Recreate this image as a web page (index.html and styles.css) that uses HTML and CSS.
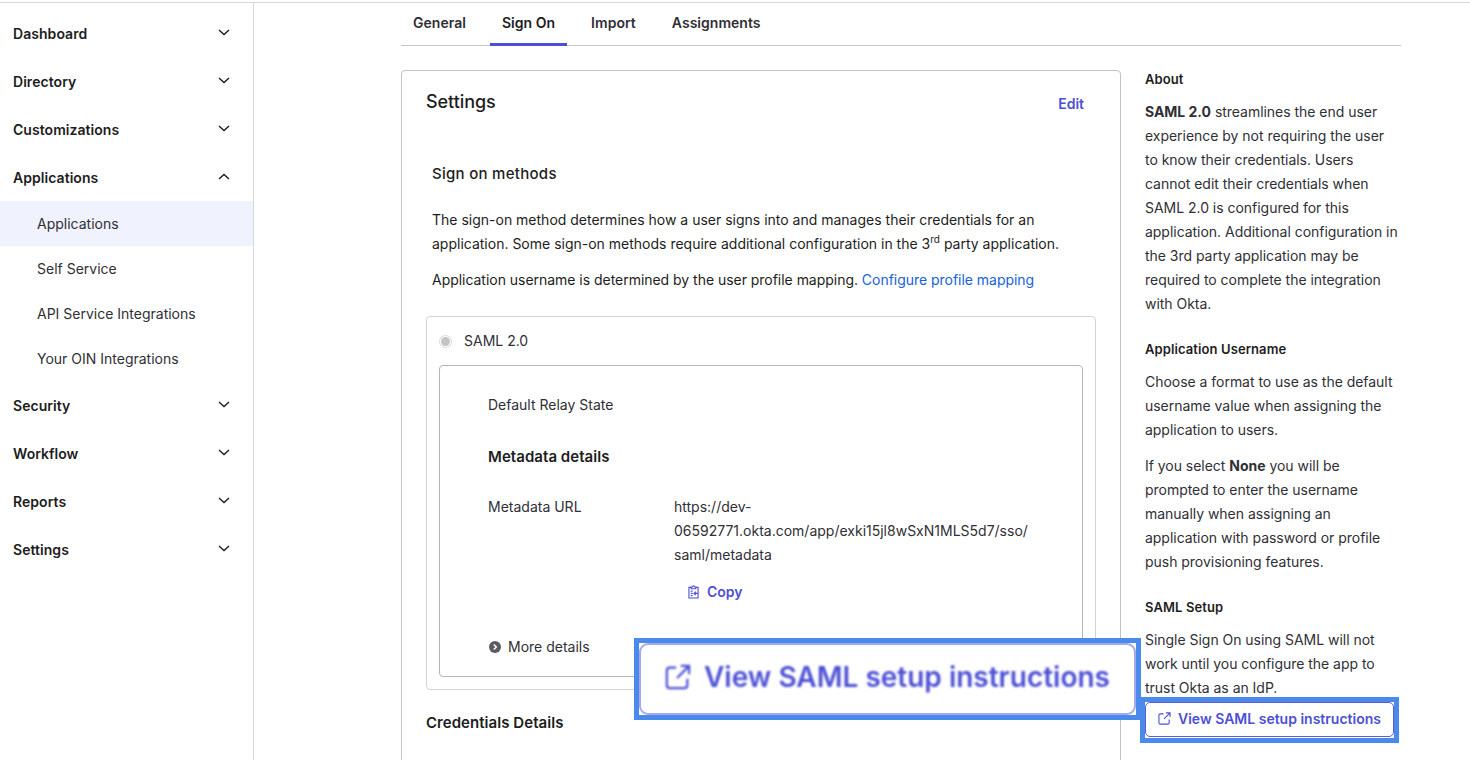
FILE: index.html
```html
<!DOCTYPE html>
<html lang="en">
<head>
<meta charset="utf-8">
<title>Sign On</title>
<link rel="stylesheet" href="styles.css">
</head>
<body>
<div class="topline"></div>
<div class="app">
  <nav class="sidebar">
    <div class="nav-item"><span>Dashboard</span><svg class="chev" viewBox="0 0 12 7"><path d="M1 1l5 4.500L11 1"/></svg></div>
    <div class="nav-item"><span>Directory</span><svg class="chev" viewBox="0 0 12 7"><path d="M1 1l5 4.500L11 1"/></svg></div>
    <div class="nav-item"><span>Customizations</span><svg class="chev" viewBox="0 0 12 7"><path d="M1 1l5 4.500L11 1"/></svg></div>
    <div class="nav-item"><span>Applications</span><svg class="chev" viewBox="0 0 12 7"><path d="M1 6l5-4.500L11 6"/></svg></div>
    <div class="sub-item active">Applications</div>
    <div class="sub-item">Self Service</div>
    <div class="sub-item">API Service Integrations</div>
    <div class="sub-item">Your OIN Integrations</div>
    <div class="nav-item"><span>Security</span><svg class="chev" viewBox="0 0 12 7"><path d="M1 1l5 4.500L11 1"/></svg></div>
    <div class="nav-item"><span>Workflow</span><svg class="chev" viewBox="0 0 12 7"><path d="M1 1l5 4.500L11 1"/></svg></div>
    <div class="nav-item"><span>Reports</span><svg class="chev" viewBox="0 0 12 7"><path d="M1 1l5 4.500L11 1"/></svg></div>
    <div class="nav-item"><span>Settings</span><svg class="chev" viewBox="0 0 12 7"><path d="M1 1l5 4.500L11 1"/></svg></div>
  </nav>
  <main class="main">
    <div class="tabs">
      <div class="tab">General</div>
      <div class="tab current">Sign On</div>
      <div class="tab">Import</div>
      <div class="tab">Assignments</div>
    </div>
    <div class="columns">
      <section class="card">
        <div class="card-head">
          <h2 class="card-title">Settings</h2>
          <a class="edit">Edit</a>
        </div>
        <div class="methods">
          <h3 class="h-sub methods-head">Sign on methods</h3>
          <p class="para first">The sign-on method determines how a user signs into and manages their credentials for an application. Some sign-on methods require additional configuration in the 3<sup class="sup">rd</sup> party application.</p>
          <p class="para second">Application username is determined by the user profile mapping. <a class="link">Configure profile mapping</a></p>
        </div>
        <div class="option">
          <div class="radio-row"><span class="radio"><span class="radio-dot"></span></span><span>SAML 2.0</span></div>
          <div class="inner">
            <div class="relay">Default Relay State</div>
            <h3 class="h-sub meta-head">Metadata details</h3>
            <div class="meta-row">
              <div class="meta-label">Metadata URL</div>
              <div class="meta-value">https://dev-<br>06592771.okta.com/app/exki15jl8wSxN1MLS5d7/sso/<br>saml/metadata</div>
            </div>
            <div class="copy-row">
              <svg class="copy-icon" viewBox="0 0 12 14"><path d="M3.500 2H1v11.500h10V2H8.500M3.500 1.500h1.300a1.200 1.200 0 0 1 2.400 0h1.300v2h-5zM3 6h2M3 8.500h2M3 11h2M11.500 8.500H6.500M8.500 6.500l-2 2 2 2"/></svg>
              <span>Copy</span>
            </div>
            <div class="more-row">
              <svg class="more-icon" viewBox="0 0 12 12"><circle cx="6" cy="6" r="6" fill="#5a5a60"/><path d="M4.800 3.500L7.300 6 4.800 8.500" fill="none" stroke="#fff" stroke-width="1.500"/></svg>
              <span>More details</span>
            </div>
          </div>
        </div>
        <h3 class="h-sub cred">Credentials Details</h3>
      </section>
      <aside class="aside">
        <h4 class="side-head">About</h4>
        <p class="side-p"><b>SAML 2.0</b> streamlines the end user experience by not requiring the user to know their credentials. Users cannot edit their credentials when SAML 2.0 is configured for this application. Additional configuration in the 3rd party application may be required to complete the integration with Okta.</p>
        <h4 class="side-head">Application Username</h4>
        <p class="side-p">Choose a format to use as the default username value when assigning the application to users.</p>
        <p class="side-p gap">If you select <b>None</b> you will be prompted to enter the username manually when assigning an application with password or profile push provisioning features.</p>
        <h4 class="side-head">SAML Setup</h4>
        <p class="side-p">Single Sign On using SAML will not work until you configure the app to trust Okta as an IdP.</p>
        <div class="mark small">
          <div class="setup-btn">
            <svg class="ext-icon" viewBox="0 0 14 14"><path d="M6 2H2.500A1.500 1.500 0 0 0 1 3.500v8A1.500 1.500 0 0 0 2.500 13h8a1.500 1.500 0 0 0 1.500-1.500V8M6.500 7.500L13 1M8.500 1H13v4.500"/></svg>
            <span>View SAML setup instructions</span>
          </div>
        </div>
      </aside>
    </div>
  </main>
</div>
<div class="callout">
  <div class="callout-btn">
    <div class="callout-inner">
      <svg class="callout-icon" viewBox="0 0 14 14"><path d="M6 2H2.500A1.500 1.500 0 0 0 1 3.500v8A1.500 1.500 0 0 0 2.500 13h8a1.500 1.500 0 0 0 1.500-1.500V8M6.500 7.500L13 1M8.500 1H13v4.500"/></svg>
      <span>View SAML setup instructions</span>
    </div>
  </div>
</div>
</body>
</html>
```

FILE: styles.css
```css
* { box-sizing: border-box; }
html, body { margin: 0; height: 760px; overflow: hidden; background: #fff; }
body { font-family: Inter, "Liberation Sans", sans-serif; font-size: 14px; line-height: 24px; color: #1d1d21; position: relative; }
h2, h3, h4, p { margin: 0; }
.topline { height: 3px; border-bottom: 1px solid #d7d7dc; }
.app { display: flex; height: 757px; overflow: hidden; }
.sidebar { width: 254px; flex: none; border-right: 1px solid #d7d7dc; padding-top: 7px; }
.nav-item { height: 48px; padding: 0 23px 0 13px; display: flex; align-items: center; justify-content: space-between; font-weight: 600; letter-spacing: 0.05px; }
.chev { width: 12px; height: 7px; fill: none; stroke: #1d1d21; stroke-width: 1.4; margin-top: -4px; }
.sub-item { height: 45px; padding-left: 37px; display: flex; align-items: center; color: #2f2f35; }
.sub-item.active { background: #f0f2fd; }
.sub-item + .nav-item { margin-top: 1px; }
.nav-item + .sub-item { margin-top: -1px; }
.main { padding-left: 147px; width: 1147px; flex: none; }
.tabs { display: flex; gap: 12px; height: 43px; border-bottom: 1px solid #c6c6cc; }
.tab { padding: 8px 12px 0; height: 43px; font-weight: 600; color: #2f2f35; letter-spacing: 0.03px; }
.tab.current { border-bottom: 3px solid #4c4fd6; color: #1d1d21; }
.columns { display: flex; gap: 24px; margin-top: 24px; }
.card { width: 720px; flex: none; height: 700px; border: 1px solid #c1c1c8; border-radius: 4px; padding: 19px 24px 0; }
.card-head { display: flex; justify-content: space-between; padding-right: 12px; height: 24px; }
.card-title { font-size: 18px; line-height: 24px; font-weight: 500; letter-spacing: -0.05px; }
.edit { font-weight: 600; color: #4c4fd6; margin-top: 2px; }
.methods { padding-left: 6px; margin-top: 48px; }
.h-sub { font-size: 15px; line-height: 24px; font-weight: 600; letter-spacing: 0.05px; }
.methods-head { font-weight: 500; letter-spacing: 0.28px; }
.para.first { margin-top: 22px; }
.para.second { margin-top: 12px; letter-spacing: -0.03px; }
.sup { font-size: 10px; line-height: 0; }
.link { color: #1662dd; }
.option { width: 670px; height: 374px; margin-top: 24px; border: 1px solid #d2d2d8; border-radius: 4px; padding: 12px 12px 0; }
.radio-row { display: flex; align-items: center; gap: 12px; height: 24px; color: #2f2f35; }
.radio { width: 13px; height: 13px; border-radius: 50%; border: 1px solid #d8d8d8; display: flex; align-items: center; justify-content: center; }
.radio-dot { width: 9px; height: 9px; border-radius: 50%; background: #c4c4c4; }
.inner { width: 644px; height: 312px; margin-top: 12px; border: 1px solid #b4b4ba; border-radius: 4px; padding: 27px 0 0 48px; color: #2f2f35; }
.meta-head { margin-top: 28px; color: #1d1d21; }
.meta-row { display: flex; margin-top: 26px; }
.meta-label { width: 186px; flex: none; }
.copy-row { display: flex; align-items: center; gap: 8px; margin: 13px 0 0 200px; color: #4c4fd6; font-weight: 600; }
.copy-icon { width: 11px; height: 14px; fill: none; stroke: #4c4fd6; stroke-width: 1.2; }
.more-row { display: flex; align-items: center; gap: 7px; margin: 31px 0 0 1px; }
.more-icon { width: 12px; height: 12px; }
.cred { margin-top: 21px; }
.aside { width: 254px; flex: none; color: #2f2f35; letter-spacing: -0.03px; }
.side-head { font-size: 13px; line-height: 18px; font-weight: 600; color: #1d1d21; letter-spacing: 0.1px; }
.side-p { margin-top: 12px; margin-bottom: 24px; }
.side-p.gap { margin-top: -12px; }
.mark { width: 259px; height: 46px; margin: -27px 0 0 -5px; border: 5px solid #4a8aec; background: #fff; }
.setup-btn { height: 35px; border: 1px solid #5a5fd8; border-radius: 5px; display: flex; align-items: center; gap: 7px; padding: 0 0 2px 12px; color: #4c4fd6; font-weight: 600; letter-spacing: 0; }
.ext-icon { width: 13px; height: 13px; fill: none; stroke: #4c4fd6; stroke-width: 1.2; }
.callout { position: absolute; left: 634px; top: 638px; width: 507px; height: 82px; border: 5px solid #4a8aec; background: #fff; }
.callout-btn { height: 100%; border: 2px solid #a6a8ec; border-radius: 9px; display: flex; align-items: center; padding: 0 0 5px 24px; }
.callout-inner { display: flex; align-items: center; gap: 13px; font-size: 28px; font-weight: 600; color: #4c4fd6; filter: blur(0.9px); }
.callout-icon { width: 26px; height: 26px; fill: none; stroke: #4c4fd6; stroke-width: 1.2; }
```
